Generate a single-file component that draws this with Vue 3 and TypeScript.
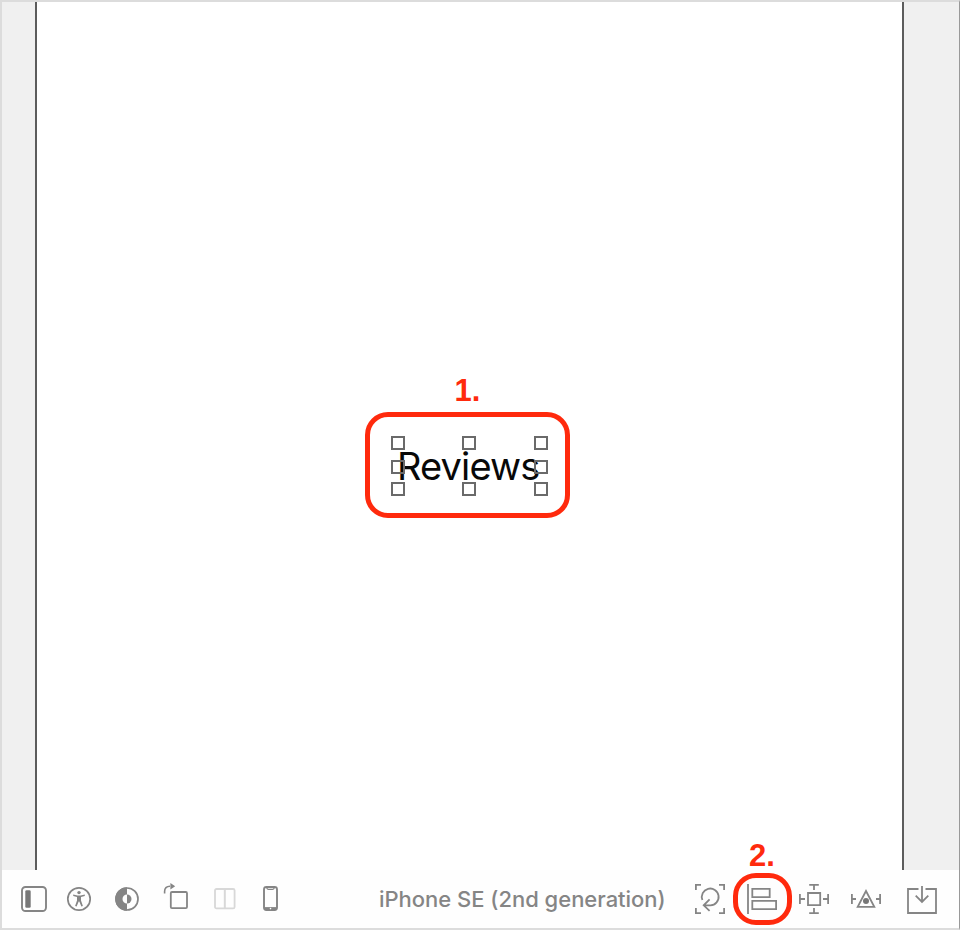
<script setup lang="ts">
const handles: string[] = ['nw', 'n', 'ne', 'w', 'e', 'sw', 's', 'se']
</script>

<template>
  <div class="window">
    <main class="editor">
      <div class="gutter"></div>
      <section class="canvas">
        <div class="annotation">
          <span class="step">1.</span>
          <div class="label-frame">
            <span class="label">Reviews</span>
            <i v-for="h in handles" :key="h" class="handle" :class="h"></i>
          </div>
        </div>
      </section>
      <div class="gutter"></div>
    </main>
    <footer class="bar">
      <svg class="icon" viewBox="0 0 30 30">
        <rect x="3" y="3" width="24" height="24" rx="3.5" stroke-width="1.9" />
        <rect x="6.3" y="6.2" width="5.4" height="17.6" rx="1.3" class="solid dark" />
      </svg>
      <svg class="icon access" viewBox="0 0 30 30">
        <circle cx="15" cy="15" r="11.2" stroke-width="1.7" />
        <circle cx="15" cy="8.6" r="1.7" class="solid" />
        <path class="solid" d="M9.2 10.6l4.3 1h3l4.3-1v1.5l-3.8 1v3.4l1.9 5.6-1.5.5-2.1-5.2h-.6l-2.1 5.2-1.5-.5 1.9-5.6v-3.4l-3.8-1z" />
      </svg>
      <svg class="icon contrast" viewBox="0 0 30 30">
        <circle cx="15" cy="15" r="11" stroke-width="1.7" />
        <path class="solid" d="M15 3.2a11.8 11.8 0 0 0 0 23.6v-7.3a4.5 4.5 0 0 1 0-9z" />
        <path class="solid" d="M15 10.5a4.5 4.5 0 0 1 0 9z" />
      </svg>
      <svg class="icon rotate" viewBox="0 0 30 30">
        <rect x="9.8" y="8" width="16.2" height="16.2" rx="1.2" stroke-width="1.8" />
        <path d="M3.6 9.6V7.6Q3.6 2.2 9 2.2" stroke-width="1.6" />
        <path class="solid" d="M9.4-1l4.8 3.2-4.8 3.2z" />
      </svg>
      <svg class="icon split" viewBox="0 0 30 30">
        <rect x="5" y="5" width="19.6" height="19.4" rx="1.5" stroke-width="1.8" />
        <path d="M14.8 5v19" stroke-width="2" />
      </svg>
      <svg class="icon phone" viewBox="0 0 30 30">
        <rect x="9" y="3" width="13" height="23" rx="2.4" stroke-width="1.9" />
        <path d="M11.5 3.4q.8 1.9 2 1.9h4q1.2 0 2-1.9" stroke-width="1.3" />
        <path d="M10 24.4h11" stroke-width="2.6" />
        <circle cx="15.5" cy="24.6" r=".8" class="hole" />
      </svg>

      <span class="device">iPhone SE (2nd generation)</span>

      <svg class="icon frames" viewBox="0 0 30 30">
        <path d="M.9 6V.9H6M24 .9h5.1V6M29.1 24v5.1H24M6 29.1H.9V24" />
        <path d="M7.4 16A8.4 8.4 0 1 1 15.4 21.3H8.7M14.6 15.4l-5.9 5.9 5.9 5.6" />
      </svg>
      <div class="align">
        <span class="step">2.</span>
        <svg class="icon" viewBox="0 0 30 30">
          <path d="M1 0v30M5.3 4.9h17.4v8.2H5.3zM5.3 16.9h23.8v8.2H5.3z" />
        </svg>
      </div>
      <svg class="icon constraint" viewBox="0 0 30 30">
        <path d="M9 9h12.2v12.2H9zM.9 10v10M.9 15H6M29.1 10v10M29.1 15H24M10.2.9h9.6M15 .9V6M10.2 29.1h9.6M15 29.1V24" />
      </svg>
      <svg class="icon resolve" viewBox="0 0 30 30">
        <path d="M.9 10v10M.9 15H5M29.1 10v10M29.1 15H25M15 7L6.7 22.8h16.6z" />
        <circle cx="15" cy="17" r="3" class="solid dark" />
      </svg>
      <svg class="icon embed" viewBox="0 0 30 30">
        <path d="M11.5 5H1v24h28V5H18.5M15 2v15.7M8.7 11.7l6.3 6.2 6.3-6.2" stroke-width="1.8" />
      </svg>
    </footer>
  </div>
</template>

<style>
body {
  margin: 0;
  background: #fff;
}
</style>

<style scoped>
.window {
  box-sizing: border-box;
  display: flex;
  flex-direction: column;
  width: 960px;
  height: 930px;
  margin-right: 1px;
  border: solid #dcdcdc;
  border-width: 2px 1px 2px 2px;
  border-right-color: #999;
  font-family: Inter, "Liberation Sans", sans-serif;
  background: #fefefe;
}

.editor {
  display: grid;
  grid-template-columns: 33px 869px 1fr;
  height: 868px;
}

.gutter {
  background: #f0f0f0;
}

.canvas {
  display: flex;
  justify-content: center;
  background: #fff;
  border: solid #5c5c5c;
  border-width: 0 2px;
}

.annotation {
  display: flex;
  flex-direction: column;
  align-items: center;
  width: 205px;
  margin-top: 372px;
  margin-right: 4px;
}

.step {
  color: #ff2a0d;
  font: bold 31px/34px "Liberation Sans", sans-serif;
}

.label-frame {
  position: relative;
  box-sizing: border-box;
  width: 205px;
  height: 106px;
  margin-top: 4px;
  padding: 25px 0 0 27px;
  border: 5px solid #ff2a0d;
  border-radius: 23px;
}

.label {
  display: block;
  color: #080808;
  font-size: 38px;
  line-height: 48px;
  letter-spacing: -0.85px;
  white-space: nowrap;
}

.handle {
  position: absolute;
  box-sizing: border-box;
  width: 14px;
  height: 14px;
  border: 2px solid #6a6a6a;
}

.nw, .w, .sw { left: 21px; }
.n, .s { left: 92px; }
.ne, .e, .se { left: 164px; }
.nw, .n, .ne { top: 19px; }
.w, .e { top: 43px; }
.sw, .s, .se { top: 65px; }

.bar {
  display: flex;
  align-items: center;
  height: 58px;
  padding-left: 17px;
}

.icon {
  display: block;
  flex: none;
  width: 30px;
  height: 30px;
  overflow: visible;
  fill: none;
  stroke: #858585;
  stroke-width: 1.8;
}

.solid {
  fill: #858585;
  stroke: none;
}

.dark {
  fill: #777;
}

.hole {
  fill: #fff;
  stroke: none;
}

.access { margin-left: 15px; }
.contrast { margin-left: 18px; }
.rotate, .split { margin-left: 19px; }
.split { stroke: #d8d8d8; }
.phone { margin-left: 15px; }

.device {
  flex: none;
  width: 316px;
  margin-left: 94px;
  color: #858585;
  font-size: 22px;
  font-weight: 450;
  line-height: 30px;
  letter-spacing: -0.02px;
  white-space: nowrap;
}

.align {
  position: relative;
  box-sizing: border-box;
  flex: none;
  width: 59px;
  height: 52px;
  margin-left: 8px;
  padding: 6px 0 0 9px;
  border: 5px solid #ff2a0d;
  border-radius: 23px;
}

.align .step {
  position: absolute;
  left: 11px;
  top: -39px;
}

.constraint { margin-left: 7px; }
.resolve { margin-left: 22px; }
.embed { margin-left: 26px; }
</style>
